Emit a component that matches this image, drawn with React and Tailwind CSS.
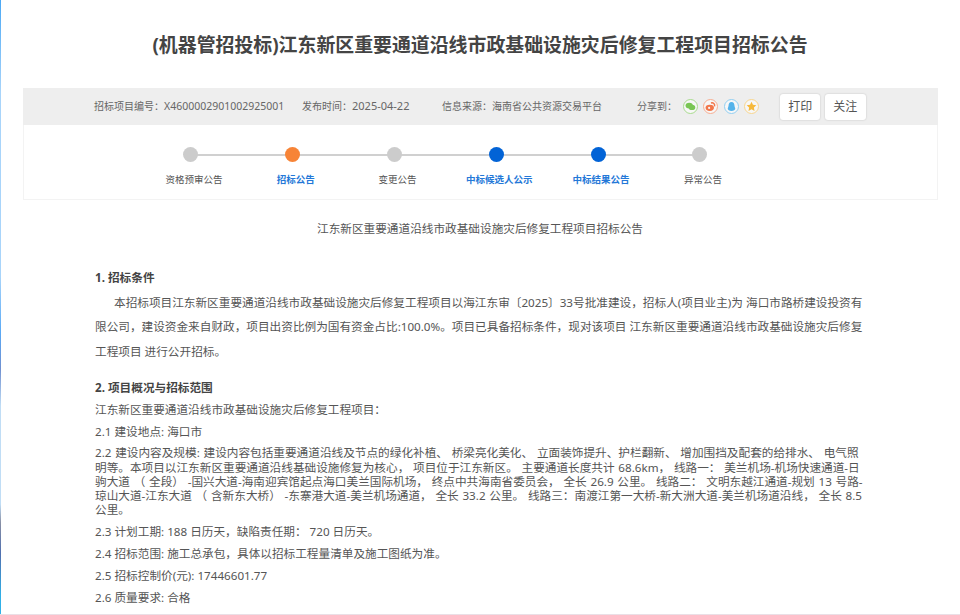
const F = '"Noto Sans","Noto Sans CJK SC",sans-serif';

function Share({ border, children }) {
  return (
    <span className={`flex h-[15px] w-[15px] items-center justify-center rounded-full border-[1.5px] bg-[#f7f7f7] ${border}`}>
      <svg viewBox="0 0 12 12" className="h-[11px] w-[11px]">{children}</svg>
    </span>
  );
}

function Step({ label, dot, text }) {
  return (
    <div className="flex w-[101.8px] flex-col items-center">
      <span className={`relative z-10 h-[15px] w-[15px] rounded-full ${dot}`} />
      <span className={`ml-[6px] mt-[11px] whitespace-nowrap text-[9.5px] leading-[14px] ${text}`}>{label}</span>
    </div>
  );
}

export default function App() {
  return (
    <div className="relative h-[615px] w-[960px] overflow-hidden bg-white text-[#555]" style={{ fontFamily: F }}>
      <div className="absolute inset-y-0 left-0 w-[1px] bg-[linear-gradient(to_bottom,#4aa8f5_0%,#a8d4fa_15%,#a8d4fa_45%,#5aa9f5_54%,#7090d0_60%,#c0ddf5_66%,#c0ddf5_82%,#888fa5_85%,#5070b0_90%,#30b0e8_97%)]" />
      <div className="absolute inset-x-0 bottom-0 h-[1px] bg-[#eadfe6]" />
      <h1 className="pt-[32px] text-center text-[18.9px] font-bold leading-[27px] text-[#444]">(机器管招投标)江东新区重要通道沿线市政基础设施灾后修复工程项目招标公告</h1>
      <div className="mx-[23px] mt-[29px] w-[915px]">
        <div className="flex h-[37px] items-center bg-[#eeeeee] pl-[71px] text-[10px] text-[#666]">
          <span className="w-[208px] whitespace-nowrap">招标项目编号：<span className="text-[10.5px]">X4600002901002925001</span></span>
          <span className="w-[140px] whitespace-nowrap">发布时间：<span className="text-[11px]">2025-04-22</span></span>
          <span className="w-[195px] whitespace-nowrap">信息来源：海南省公共资源交易平台</span>
          <span className="w-[46px] whitespace-nowrap">分享到：</span>
          <span className="flex gap-[5.4px]">
            <Share border="border-[#a9dc8e]">
              <ellipse cx="4.6" cy="5" rx="4" ry="3.2" fill="#79c653" />
              <ellipse cx="7.6" cy="7" rx="3.6" ry="2.9" fill="#79c653" />
            </Share>
            <Share border="border-[#f8ae92]">
              <ellipse cx="5.2" cy="7.4" rx="4.6" ry="3.4" fill="#f2764a" />
              <path d="M6.5 2.2c2.5-.7 4.6 1 3.9 3.6" fill="none" stroke="#f2764a" strokeWidth="1.6" />
              <circle cx="4.5" cy="7.6" r="1.2" fill="#f7f7f7" />
            </Share>
            <Share border="border-[#92cff2]">
              <path d="M6 1c2.2 0 3.2 1.8 3.2 3.8 0 1.1.9 2.6.9 3.7 0 1.2-1.7 2.5-4.1 2.5s-4.1-1.3-4.1-2.5c0-1.100.9-2.600.9-3.700C2.800 2.800 3.800 1 6 1z" fill="#55b3ea" />
            </Share>
            <Share border="border-[#f9d68e]">
              <path d="M6 .8l1.600 3.400 3.700.5-2.700 2.500.7 3.600L6 9l-3.300 1.800.7-3.600L.7 4.700l3.700-.5z" fill="#f6b93b" />
            </Share>
          </span>
          <span className="ml-[21px] flex gap-[4.500px]">
            <button className="h-[26px] w-[40px] rounded-[3px] bg-white text-[12px] text-[#555] shadow-[0_0_2px_rgba(0,0,0,0.2)]">打印</button>
            <button className="h-[26px] w-[41px] rounded-[3px] bg-white text-[12px] text-[#555] shadow-[0_0_2px_rgba(0,0,0,0.2)]">关注</button>
          </span>
        </div>
        <div className="relative flex h-[75px] border border-t-0 border-[#f3f3f3] pl-[116px] pt-[22px]">
          <div className="absolute left-[166px] top-[29px] h-[2px] w-[510px] bg-[#d0d0d0]" />
          <Step label="资格预审公告" dot="bg-[#cccccc]" text="text-[#555]" />
          <Step label="招标公告" dot="bg-[#f78437]" text="font-bold text-[#2478d8]" />
          <Step label="变更公告" dot="bg-[#cccccc]" text="text-[#555]" />
          <Step label="中标候选人公示" dot="bg-[#0263d6]" text="font-bold text-[#2478d8]" />
          <Step label="中标结果公告" dot="bg-[#0263d6]" text="font-bold text-[#2478d8]" />
          <Step label="异常公告" dot="bg-[#cccccc]" text="text-[#555]" />
        </div>
      </div>
      <p className="mt-[20px] text-center text-[11.65px] leading-[18px]">江东新区重要通道沿线市政基础设施灾后修复工程项目招标公告</p>
      <div className="ml-[95px] w-[770px] text-[11.65px]">
        <h2 className="mt-[31px] font-bold leading-[18px] text-[#444]">1. 招标条件</h2>
        <p className="mt-[4px] indent-[19px] leading-[24.3px]">本招标项目江东新区重要通道沿线市政基础设施灾后修复工程项目以海江东审〔2025〕33号批准建设，招标人(项目业主)为 海口市路桥建设投资有限公司，建设资金来自财政，项目出资比例为国有资金占比:100.0%。项目已具备招标条件，现对该项目 江东新区重要通道沿线市政基础设施灾后修复工程项目 进行公开招标。</p>
        <h2 className="mt-[15.4px] font-bold leading-[18px] text-[#444]">2. 项目概况与招标范围</h2>
        <p className="mt-[5px] leading-[16px]">江东新区重要通道沿线市政基础设施灾后修复工程项目：</p>
        <p className="mt-[6px] leading-[16px]">2.1 建设地点: 海口市</p>
        <p className="mt-[6.2px] leading-[14.2px] [word-spacing:0.7px]">2.2 建设内容及规模: 建设内容包括重要通道沿线及节点的绿化补植、 桥梁亮化美化、 立面装饰提升、护栏翻新、 增加围挡及配套的给排水、 电气照明等。本项目以江东新区重要通道沿线基础设施修复为核心， 项目位于江东新区。 主要通道长度共计 68.6km， 线路一： 美兰机场-机场快速通道-日驹大道 （ 全段） -国兴大道-海南迎宾馆起点海口美兰国际机场， 终点中共海南省委员会， 全长 26.9 公里。 线路二： 文明东越江通道-规划 13 号路-琼山大道-江东大道 （ 含新东大桥） -东寨港大道-美兰机场通道， 全长 33.2 公里。 线路三：南渡江第一大桥-新大洲大道-美兰机场道沿线， 全长 8.5 公里。</p>
        <p className="mt-[7px] leading-[16px]">2.3 计划工期: 188 日历天，缺陷责任期： 720 日历天。</p>
        <p className="mt-[6px] leading-[16px]">2.4 招标范围: 施工总承包，具体以招标工程量清单及施工图纸为准。</p>
        <p className="mt-[6px] leading-[16px]">2.5 招标控制价(元): 17446601.77</p>
        <p className="mt-[6px] leading-[16px]">2.6 质量要求: 合格</p>
      </div>
    </div>
  );
}
